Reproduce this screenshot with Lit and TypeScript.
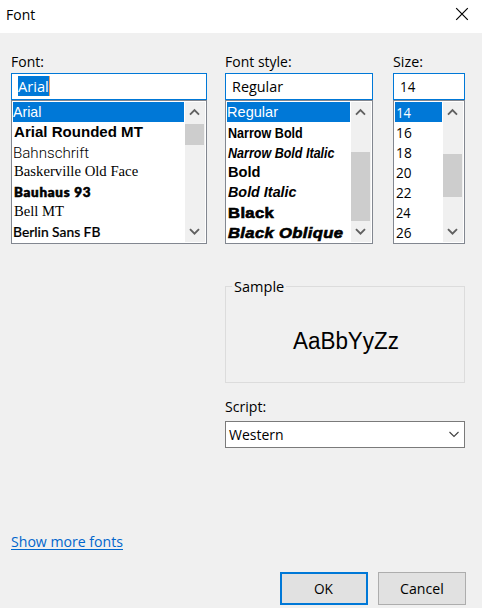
import { LitElement, html, css, svg } from "lit";
import { customElement, property } from "lit/decorators.js";

/** A single line of text fitted to an ink width, standing on a given baseline. */
@customElement("fit-text")
class FitText extends LitElement {
  @property() text = "";
  @property({ type: Number }) ink = 0;
  @property({ type: Number }) base = 0;

  static styles = css`
    :host { display: block; white-space: pre; line-height: 20px; height: 20px; }
    .run { display: inline-block; transform-origin: 0 0; }
    .mark { display: inline-block; width: 0; height: 0; }
  `;

  render() {
    return html`<span class="run">${this.text}</span><span class="mark"></span>`;
  }

  updated() {
    const run = this.renderRoot.querySelector(".run") as HTMLElement;
    const mark = this.renderRoot.querySelector(".mark") as HTMLElement;
    const cs = getComputedStyle(this);
    const ctx = document.createElement("canvas").getContext("2d")!;
    ctx.font = `${cs.fontStyle} ${cs.fontWeight} ${cs.fontSize} ${cs.fontFamily}`;
    const spacing = (parseFloat(cs.letterSpacing) || 0) * (this.text.length - 1);
    const m = ctx.measureText(this.text);
    const k = this.ink / (m.actualBoundingBoxRight + m.actualBoundingBoxLeft + spacing);
    const baseline = mark.getBoundingClientRect().bottom - this.getBoundingClientRect().top;
    const dy = Math.round(this.base - baseline);
    run.style.transform = `translate(${m.actualBoundingBoxLeft * k}px, ${dy}px) scaleX(${k})`;
  }
}

type Row = { text: string; ink: number; base: number; face: string };

const fonts: Row[] = [
  { text: "Arial", ink: 28, base: 15, face: "arial" },
  { text: "Arial Rounded MT", ink: 129, base: 15, face: "rounded" },
  { text: "Bahnschrift", ink: 75.5, base: 16, face: "bahn" },
  { text: "Baskerville Old Face", ink: 123.8, base: 14, face: "serif" },
  { text: "Bauhaus 93", ink: 76, base: 15, face: "bauhaus" },
  { text: "Bell MT", ink: 50.3, base: 14, face: "serif" },
  { text: "Berlin Sans FB", ink: 86.3, base: 15, face: "berlin" },
];

const styles: Row[] = [
  { text: "Regular", ink: 50, base: 15, face: "arial" },
  { text: "Narrow Bold", ink: 74, base: 16, face: "bold" },
  { text: "Narrow Bold Italic", ink: 106.5, base: 16, face: "bold italic" },
  { text: "Bold", ink: 31.7, base: 15, face: "bold" },
  { text: "Bold Italic", ink: 68.5, base: 15, face: "bold italic" },
  { text: "Black", ink: 45.9, base: 16, face: "black" },
  { text: "Black Oblique", ink: 115, base: 16, face: "black italic" },
];

const sizes: Row[] = ["14", "16", "18", "20", "22", "24", "26"].map((text) => ({
  text, ink: text[0] === "1" ? 14.3 : 15, base: 16, face: text[0] === "1" ? "one" : "",
}));

const arrow = (up: boolean) => html`<svg class="arrow" width="20" height="20" viewBox="0 0 20 20">
  ${svg`<path d=${up ? "M5 12.6 L9.5 8.1 L14 12.6" : "M5 7.2 L9.5 11.7 L14 7.2"} />`}</svg>`;

@customElement("app-root")
class AppRoot extends LitElement {
  static styles = css`
    :host {
      display: flex; flex-direction: column; width: 482px; height: 608px; overflow: hidden;
      background: #f0f0f0; color: #000; font: 15px "Open Sans", "Noto Sans", sans-serif;
    }
    * { box-sizing: border-box; }
    header { height: 33px; background: #fff; display: flex; justify-content: space-between; padding: 5px 13px 0 7px; }
    .close { display: block; margin-top: 2px; }
    .close path { stroke: #000; stroke-width: 1.2; fill: none; }
    .pickers { display: grid; grid-template-columns: 196px 148px 72px; padding: 19px 0 0 11px; column-gap: 18px; }
    .size { margin-left: 2px; width: 72px; }
    .caption { margin-left: 0.5px; height: 21px; }
    .size .caption { margin-left: 0; }
    .entry { height: 27px; border: 1px solid #0078d7; background: #fff; padding: 2px 0 0 6px; }
    .entry fit-text { margin-left: 1px; }
    .entry .picked { width: 32px; height: 20px; background: #0078d7; color: #fff; border-right: 1px solid #f0a060; }
    .entry .picked fit-text { margin-left: 0; }
    .list { height: 144px; border: 1px solid #828790; background: #fff; padding: 1px; display: flex; }
    .rows { flex: 1; display: grid; grid-auto-rows: 20px; overflow: hidden; }
    .row { padding-left: 1px; }
    .fonts .row { padding-left: 0.8px; }
    .fonts .row.arial { padding-left: 0.2px; }
    .sizes .row { padding-left: 1.2px; }
    .sizes .one { padding-left: 2.1px; }
    .row.on { background: #0078d7; color: #fff; }
    .bar { width: 20px; margin-left: 1px; background: #f0f0f0; display: flex; flex-direction: column; justify-content: space-between; }
    .thumb { width: 19px; background: #cdcdcd; }
    .track { height: 100px; }
    .fonts .track { padding-top: 2px; }
    .style-list .track { padding-top: 30px; }
    .sizes .track { padding-top: 32px; }
    .fonts .thumb { height: 21px; }
    .style-list .thumb { height: 69px; }
    .sizes .thumb { height: 43px; }
    .arrow { display: block; }
    .arrow path { stroke: #606060; stroke-width: 1.9; fill: none; }
    .arial { font: 15px "Liberation Sans", sans-serif; }
    .rounded { font: bold 14.5px "Liberation Sans", sans-serif; }
    .bahn { font: 300 14.5px Roboto, sans-serif; color: #000; }
    .serif { font: 14.3px "Liberation Serif", serif; }
    .bauhaus { font: 900 13px Lato, sans-serif; letter-spacing: 0.7px; -webkit-text-stroke: 0.6px #000; }
    .berlin { font: 500 14px Lato, sans-serif; -webkit-text-stroke: 0.2px #000; }
    .bold { font: bold 14.5px "Liberation Sans", sans-serif; }
    .black { font: bold 14.3px "Liberation Sans", sans-serif; letter-spacing: 0.3px; -webkit-text-stroke: 0.6px #000; }
    .italic { font-style: italic; }
    .lower { width: 240px; margin-left: 225px; }
    .sample { height: 97px; margin-top: 42px; border: 1px solid #dcdcdc; }
    .legend { width: 54px; height: 20px; margin: -10px 0 0 6px; padding-left: 2px; background: #f0f0f0; }
    .preview { font: 23.3px "Liberation Sans", sans-serif; margin: 32px 0 0 67px; }
    .script { margin-top: 14px; height: 24px; }
    .select { height: 27px; border: 1px solid #7a7a7a; background: #fff; display: flex; justify-content: space-between; padding: 3px 4px 0 3.3px; }
    .select path { stroke: #404040; stroke-width: 1.1; fill: none; }
    .link { width: 112px; height: 18px; margin: 84px 0 0 11px; border-bottom: 1px solid #0066cc; color: #0066cc; }
    footer { display: flex; gap: 10px; margin: 22px 0 0 280px; }
    .btn { width: 88px; height: 33px; background: #e1e1e1; border: 1px solid #adadad; padding: 6px 0 0 21px; }
    .btn.main { border: 2px solid #0078d7; padding: 5px 0 0 32px; }
  `;

  private list(name: string, rows: Row[]) {
    return html`<div class="list ${name}">
      <div class="rows">${rows.map((r, i) => html`<div class="row ${r.face} ${i === 0 ? "on" : ""}">
        <fit-text .text=${r.text} .ink=${r.ink} .base=${r.base}></fit-text></div>`)}</div>
      <div class="bar">${arrow(true)}<div class="track"><div class="thumb"></div></div>${arrow(false)}</div>
    </div>`;
  }

  render() {
    return html`
      <header>
        <fit-text .text=${"Font"} .ink=${27.8} .base=${15}></fit-text>
        <svg class="close" width="14" height="14" viewBox="0 0 14 14"><path d="M1.2 1.2 L12.8 12.8 M12.8 1.2 L1.2 12.8" /></svg>
      </header>
      <div class="pickers">
        <div>
          <fit-text class="caption" .text=${"Font:"} .ink=${31} .base=${15}></fit-text>
          <div class="entry"><div class="picked"><fit-text .text=${"Arial"} .ink=${30} .base=${16}></fit-text></div></div>
          ${this.list("fonts", fonts)}
        </div>
        <div>
          <fit-text class="caption" .text=${"Font style:"} .ink=${64.7} .base=${15}></fit-text>
          <div class="entry"><fit-text .text=${"Regular"} .ink=${50} .base=${16}></fit-text></div>
          ${this.list("style-list", styles)}
        </div>
        <div class="size">
          <fit-text class="caption" .text=${"Size:"} .ink=${29} .base=${15}></fit-text>
          <div class="entry"><fit-text .text=${"14"} .ink=${14.6} .base=${16}></fit-text></div>
          ${this.list("sizes", sizes)}
        </div>
      </div>
      <div class="lower">
        <div class="sample">
          <div class="legend"><fit-text .text=${"Sample"} .ink=${49.8} .base=${15}></fit-text></div>
          <fit-text class="preview" .text=${"AaBbYyZz"} .ink=${105.3} .base=${20}></fit-text>
        </div>
        <fit-text class="script" .text=${"Script:"} .ink=${40.3} .base=${15}></fit-text>
        <div class="select">
          <fit-text .text=${"Western"} .ink=${53.5} .base=${15}></fit-text>
          <svg width="12" height="18" viewBox="0 0 12 18"><path d="M1.5 7 L6 11.5 L10.5 7" /></svg>
        </div>
      </div>
      <div class="link"><fit-text .text=${"Show more fonts"} .ink=${111.8} .base=${15}></fit-text></div>
      <footer>
        <div class="btn main"><fit-text .text=${"OK"} .ink=${19.7} .base=${15}></fit-text></div>
        <div class="btn"><fit-text .text=${"Cancel"} .ink=${43} .base=${15}></fit-text></div>
      </footer>`;
  }
}
